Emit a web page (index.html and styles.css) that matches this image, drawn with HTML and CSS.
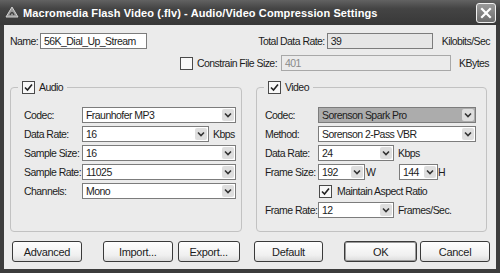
FILE: index.html
```html
<!DOCTYPE html>
<html lang="en">
<head>
    <meta charset="UTF-8">
    <title>Audio/Video Compression Settings</title>
    <link rel="stylesheet" href="styles.css">
</head>
<body>
    <div class="window">
        <div class="titlebar">
            <svg class="app-icon" width="14" height="13" viewBox="0 0 14 13">
                <path d="M7 1 L13 11 L1 11 Z" fill="#9a9a9a" stroke="#d0d0d0" stroke-width="1"/>
                <path d="M5 9 Q7 4 9 9" fill="none" stroke="#404040" stroke-width="1.4"/>
            </svg>
            <span class="title">Macromedia Flash Video (.flv) - Audio/Video Compression Settings</span>
            <div class="close-btn">
                <svg width="12" height="12" viewBox="0 0 12 12">
                    <path d="M2 2 L10 10 M10 2 L2 10" stroke="#fff" stroke-width="2.2" stroke-linecap="square"/>
                </svg>
            </div>
        </div>

        <div class="content">
            <!-- Name / total rate -->
            <div class="row top-row">
                <div class="field">
                    <span class="name-label">Name:</span>
                    <div class="textbox name-box">56K_Dial_Up_Stream</div>
                </div>
                <div class="field">
                    <span>Total Data Rate:</span>
                    <div class="textbox readonly rate-box">39</div>
                    <span class="unit">Kilobits/Sec</span>
                </div>
            </div>

            <div class="row constrain-row">
                <span class="checkbox"></span>
                <span class="check-text">Constrain File Size:</span>
                <div class="textbox disabled size-box">401</div>
                <span class="unit">KBytes</span>
            </div>

            <div class="groups">
                <!-- Audio -->
                <fieldset class="group">
                    <legend><span class="checkbox checked"><svg width="11" height="11" viewBox="0 0 11 11"><path d="M2 5.5 L4.5 8 L9 2.5" fill="none" stroke="#222" stroke-width="1.6"/></svg></span>Audio</legend>
                    <div class="group-body audio">
                        <div class="form-row">
                            <span class="lbl">Codec:</span>
                            <div class="select w154"><span class="val">Fraunhofer MP3</span><span class="arrow"></span></div>
                        </div>
                        <div class="form-row">
                            <span class="lbl">Data Rate:</span>
                            <div class="select w127"><span class="val">16</span><span class="arrow"></span></div>
                            <span class="unit">Kbps</span>
                        </div>
                        <div class="form-row">
                            <span class="lbl">Sample Size:</span>
                            <div class="select w154"><span class="val">16</span><span class="arrow"></span></div>
                        </div>
                        <div class="form-row">
                            <span class="lbl">Sample Rate:</span>
                            <div class="select w154"><span class="val">11025</span><span class="arrow"></span></div>
                        </div>
                        <div class="form-row">
                            <span class="lbl">Channels:</span>
                            <div class="select w154"><span class="val">Mono</span><span class="arrow"></span></div>
                        </div>
                    </div>
                </fieldset>

                <!-- Video -->
                <fieldset class="group">
                    <legend><span class="checkbox checked"><svg width="11" height="11" viewBox="0 0 11 11"><path d="M2 5.5 L4.5 8 L9 2.5" fill="none" stroke="#222" stroke-width="1.6"/></svg></span>Video</legend>
                    <div class="group-body video">
                        <div class="form-row">
                            <span class="lbl">Codec:</span>
                            <div class="select w158 highlight"><span class="val">Sorenson Spark Pro</span><span class="arrow"></span></div>
                        </div>
                        <div class="form-row">
                            <span class="lbl">Method:</span>
                            <div class="select w158"><span class="val">Sorenson 2-Pass VBR</span><span class="arrow"></span></div>
                        </div>
                        <div class="form-row">
                            <span class="lbl">Data Rate:</span>
                            <div class="select w76"><span class="val">24</span><span class="arrow"></span></div>
                            <span class="unit">Kbps</span>
                        </div>
                        <div class="form-row">
                            <span class="lbl">Frame Size:</span>
                            <div class="select w47"><span class="val">192</span><span class="arrow"></span></div>
                            <span class="dim">W</span>
                            <div class="select w39"><span class="val">144</span><span class="arrow"></span></div>
                            <span>H</span>
                        </div>
                        <div class="form-row aspect-row">
                            <span class="checkbox checked"><svg width="11" height="11" viewBox="0 0 11 11"><path d="M2 5.5 L4.5 8 L9 2.5" fill="none" stroke="#222" stroke-width="1.6"/></svg></span>
                            <span>Maintain Aspect Ratio</span>
                        </div>
                        <div class="form-row">
                            <span class="lbl">Frame Rate:</span>
                            <div class="select w76"><span class="val">12</span><span class="arrow"></span></div>
                            <span class="unit">Frames/Sec.</span>
                        </div>
                    </div>
                </fieldset>
            </div>

            <div class="buttons">
                <button class="btn b-advanced">Advanced</button>
                <button class="btn b-import">Import...</button>
                <button class="btn b-export">Export...</button>
                <button class="btn b-default">Default</button>
                <button class="btn b-ok default-btn">OK</button>
                <button class="btn b-cancel">Cancel</button>
            </div>
        </div>
    </div>
</body>
</html>
```

FILE: styles.css
```css
body {
    margin: 0;
    font-family: "Liberation Sans", Arial, sans-serif;
    font-size: 10.5px;
    letter-spacing: -0.55px;
    color: #1c1c1c;
    background: #fff;
    white-space: nowrap;
}
.window {
    width: 500px;
    height: 273px;
    background: #3c3c3c;
    display: flex;
    flex-direction: column;
}
.titlebar {
    height: 25px;
    flex: none;
    display: flex;
    align-items: center;
    background: linear-gradient(#626262, #444 35%, #383838);
    color: #fff;
}
.app-icon {
    margin-left: 5px;
}
.title {
    margin-left: 4px;
    font-size: 11px;
    font-weight: bold;
    letter-spacing: 0.1px;
}
.close-btn {
    margin-left: auto;
    margin-right: 4px;
    width: 18px;
    height: 18px;
    border: 1px solid #f0f0f0;
    border-radius: 3px;
    background: linear-gradient(#9a9a9a, #6e6e6e);
    display: flex;
    align-items: center;
    justify-content: center;
}
.content {
    margin: 0 4px 4px;
    flex: 1;
    background: #ebebeb;
    padding: 8px 6px 0;
}
.row {
    display: flex;
    align-items: center;
    height: 16px;
}
.top-row {
    justify-content: space-between;
}
.field {
    display: flex;
    align-items: center;
}
.name-label {
    width: 30px;
}
.textbox {
    box-sizing: border-box;
    height: 16px;
    line-height: 14px;
    border: 1px solid #7c7c7c;
    background: #fff;
    padding: 0 3px;
}
.textbox.readonly {
    background: #e6e6e6;
}
.textbox.disabled {
    background: #ebebeb;
    border-color: #a8a8a8;
    color: #8a8a8a;
}
.name-box {
    width: 107px;
}
.rate-box {
    width: 106px;
    margin: 0 5px 0 2px;
}
.constrain-row {
    margin-top: 6px;
    justify-content: flex-end;
    padding-right: 1px;
}
.check-text {
    margin-left: 4px;
}
.size-box {
    width: 170px;
    margin: 0 4px;
}
.checkbox {
    box-sizing: border-box;
    width: 13px;
    height: 13px;
    border: 1px solid #4a4a4a;
    background: #f8f8f8;
    display: inline-flex;
    align-items: center;
    justify-content: center;
    flex: none;
}
.groups {
    margin-top: 9px;
    display: grid;
    grid-template-columns: 232px 231px;
    column-gap: 14px;
}
.group {
    margin: 0;
    padding: 0;
    height: 152px;
    box-sizing: border-box;
    border: 1px solid #c2c2c2;
    border-radius: 4px;
    min-width: 0;
}
.group legend {
    margin-left: 7px;
    padding: 0 4px;
    height: 14px;
    display: flex;
    align-items: center;
    gap: 4px;
}
.group-body {
    padding-top: 13px;
    display: flex;
    flex-direction: column;
    gap: 3px;
}
.group-body.audio {
    padding-left: 13px;
}
.group-body.video {
    padding-left: 8px;
}
.form-row {
    display: flex;
    align-items: center;
    height: 16px;
}
.lbl {
    flex: none;
}
.audio .lbl {
    width: 58px;
}
.video .lbl {
    width: 53px;
}
.select {
    box-sizing: border-box;
    height: 16px;
    border: 1px solid #7c7c7c;
    background: #fff;
    display: flex;
    align-items: center;
    padding: 0 1px 0 3px;
    flex: none;
}
.select .val {
    flex: 1;
    overflow: hidden;
}
.select .arrow {
    width: 12px;
    height: 12px;
    border-radius: 2px;
    background: #dedede url("data:image/svg+xml;utf8,<svg xmlns='http://www.w3.org/2000/svg' width='12' height='12'><path d='M3 4.5 L6 7.5 L9 4.5' fill='none' stroke='%23333' stroke-width='1.6'/></svg>") center no-repeat;
}
.select.highlight {
    background: #acacac;
}
.w154 { width: 154px; }
.w158 { width: 158px; }
.w127 { width: 127px; }
.w76 { width: 76px; }
.w47 { width: 47px; }
.w39 { width: 39px; }
.unit {
    margin-left: 4px;
}
.dim {
    width: 33px;
    padding-left: 1px;
}
.aspect-row {
    padding-left: 54px;
    gap: 5px;
}
.buttons {
    margin-top: 9px;
    display: flex;
    height: 21px;
}
.btn {
    box-sizing: border-box;
    height: 21px;
    font-family: "Liberation Sans", Arial, sans-serif;
    font-size: 11px;
    letter-spacing: -0.3px;
    color: #1c1c1c;
    border: 1px solid #3a3a3a;
    border-radius: 3px;
    background: linear-gradient(#fefefe, #f0f0f0 70%, #dcdcdc);
    padding: 0;
}
.default-btn {
    box-shadow: inset 0 0 0 1px #9a9a9a;
}
.b-advanced { width: 70px; margin-left: 2px; }
.b-import { width: 70px; margin-left: 21px; }
.b-export { width: 62px; margin-left: 5px; }
.b-default { width: 70px; margin-left: 14px; }
.b-ok { width: 73px; margin-left: 21px; }
.b-cancel { width: 70px; margin-left: 3px; }
```
